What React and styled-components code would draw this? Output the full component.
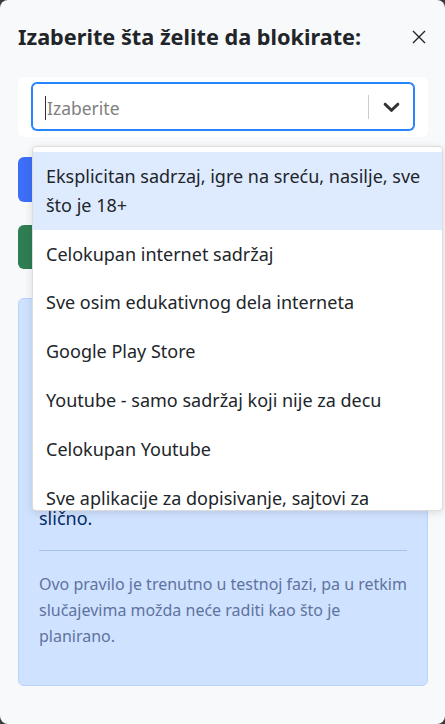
import React from 'react';
import styled, { createGlobalStyle } from 'styled-components';

const GlobalStyle = createGlobalStyle`
  html, body {
    margin: 0;
    padding: 0;
    background: #3a3a3a;
  }
  * {
    box-sizing: border-box;
  }
`;

const Modal = styled.div`
  width: 445px;
  height: 724px;
  background: #f8f9fa;
  border-radius: 8px;
  font-family: "Noto Sans", "Open Sans", sans-serif;
  color: #212529;
  display: flex;
  flex-direction: column;
  overflow: hidden;
`;

const Header = styled.div`
  display: flex;
  justify-content: space-between;
  align-items: center;
  padding: 23px 19px 26px 18px;
`;

const Title = styled.h5`
  margin: 0;
  font-size: 21.7px;
  line-height: 28px;
  font-weight: 700;
  color: #212529;
`;

const CloseButton = styled.button`
  border: none;
  background: transparent;
  padding: 0;
  width: 14px;
  height: 14px;
  display: flex;
  cursor: pointer;
  color: #212529;
`;

const Body = styled.div`
  display: flex;
  flex-direction: column;
  padding: 0 17px 38px 18px;
`;

const SelectCard = styled.div`
  position: relative;
  background: #fff;
  border-radius: 6px;
  padding: 6px 14px 7px;
`;

const Control = styled.div`
  height: 47px;
  display: flex;
  align-items: center;
  border: 1px solid #2684ff;
  box-shadow: 0 0 0 1px #2684ff;
  border-radius: 5px;
  background: #fff;
  padding-left: 12px;
`;

const Placeholder = styled.div`
  flex: 1;
  font-size: 17.5px;
  color: #808080;
  display: flex;
  align-items: center;
  padding-top: 2px;
  &::before {
    content: '';
    width: 1px;
    height: 24px;
    background: #333;
    margin-right: 1px;
  }
`;

const Separator = styled.span`
  width: 1px;
  height: 24px;
  background: #ccc;
`;

const Indicator = styled.div`
  width: 44px;
  display: flex;
  justify-content: center;
  align-items: center;
  color: #333;
`;

const Menu = styled.div`
  position: absolute;
  top: 69px;
  left: 14px;
  width: 411px;
  background: #fff;
  border: 1px solid #dcdcdc;
  border-radius: 4px;
  box-shadow: 0 2px 8px rgba(0, 0, 0, 0.12);
  z-index: 10;
`;

const MenuList = styled.div`
  max-height: 363px;
  overflow-y: auto;
  padding: 5px 0 4px;

  &::-webkit-scrollbar {
    width: 6px;
  }
  &::-webkit-scrollbar-track {
    background: #fff;
  }
  &::-webkit-scrollbar-thumb {
    background: #c1c1c1;
  }
`;

const Option = styled.div`
  padding: 10px 13px;
  font-size: 18px;
  line-height: 28.8px;
  color: #212529;
  background: ${p => (p.$focused ? '#deebff' : 'transparent')};
`;

const ActionButton = styled.button`
  margin-top: ${p => p.$gap}px;
  height: ${p => p.$height}px;
  border: none;
  border-radius: 6px;
  background: ${p => p.$color};
  color: #fff;
  font-family: inherit;
  font-size: 16px;
`;

const InfoBox = styled.div`
  margin-top: 29px;
  padding: 20px;
  background: #cfe2ff;
  border: 1px solid #b6d4fe;
  border-radius: 6px;
  display: flex;
  flex-direction: column;
`;

const InfoTitle = styled.strong`
  display: block;
  font-size: 18px;
  line-height: 26px;
  margin-bottom: 4px;
  color: #052c65;
`;

const InfoText = styled.p`
  margin: 0;
  font-size: 18px;
  line-height: 26px;
  color: #052c65;
`;

const Divider = styled.hr`
  border: none;
  border-top: 1px solid #a6c2ef;
  margin: 19px 0 20px;
`;

const Note = styled.p`
  margin: 0 0 16px;
  font-size: 16px;
  line-height: 26px;
  color: #5f73a0;
`;

const options = [
  'Eksplicitan sadrzaj, igre na sreću, nasilje, sve što je 18+',
  'Celokupan internet sadržaj',
  'Sve osim edukativnog dela interneta',
  'Google Play Store',
  'Youtube - samo sadržaj koji nije za decu',
  'Celokupan Youtube',
  'Sve aplikacije za dopisivanje, sajtovi za upoznavanje i slično',
  'Društvene mreže',
];

const infoLines = [
  'Pravilo blokira odabrani sadržaj',
  'na uređaju vašeg deteta, bez',
  'obzira na to da li se koristi',
  'pretraživač ili aplikacija. Ovo',
  'obuhvata sajtove, video sadržaj,',
  'igrice, društvene mreže i',
];

export default function App() {
  return (
    <>
      <GlobalStyle />
      <Modal>
        <Header>
          <Title>Izaberite šta želite da blokirate:</Title>
          <CloseButton aria-label="Zatvori">
            <svg width="14" height="14" viewBox="0 0 14 14">
              <path d="M1 1L13 13M13 1L1 13" stroke="currentColor" strokeWidth="1.4" />
            </svg>
          </CloseButton>
        </Header>
        <Body>
          <SelectCard>
            <Control>
              <Placeholder>Izaberite</Placeholder>
              <Separator />
              <Indicator>
                <svg width="27" height="27" viewBox="0 0 20 20" fill="currentColor">
                  <path d="M4.516 7.548c0.436-0.446 1.043-0.481 1.576 0l3.908 3.747 3.908-3.747c0.533-0.481 1.141-0.446 1.574 0 0.436 0.445 0.408 1.197 0 1.615-0.406 0.418-4.695 4.502-4.695 4.502-0.217 0.223-0.502 0.335-0.787 0.335s-0.57-0.112-0.789-0.335c0 0-4.287-4.084-4.695-4.502s-0.436-1.17 0-1.615z" />
                </svg>
              </Indicator>
            </Control>
            <Menu>
              <MenuList>
                {options.map((o, i) => (
                  <Option key={o} $focused={i === 0}>{o}</Option>
                ))}
              </MenuList>
            </Menu>
          </SelectCard>
          <ActionButton $gap={20} $height={45} $color="#3d6ef7">Dodaj pravilo</ActionButton>
          <ActionButton $gap={23} $height={44} $color="#2f7d52">Sačuvaj</ActionButton>
          <InfoBox>
            <InfoTitle>Šta ovo pravilo radi?</InfoTitle>
            <InfoText>
              {infoLines.map(l => (
                <React.Fragment key={l}>{l}<br /></React.Fragment>
              ))}
              slično.
            </InfoText>
            <Divider />
            <Note>
              Ovo pravilo je trenutno u testnoj fazi, pa u retkim slučajevima možda neće
              raditi kao što je planirano.
            </Note>
          </InfoBox>
        </Body>
      </Modal>
    </>
  );
}
